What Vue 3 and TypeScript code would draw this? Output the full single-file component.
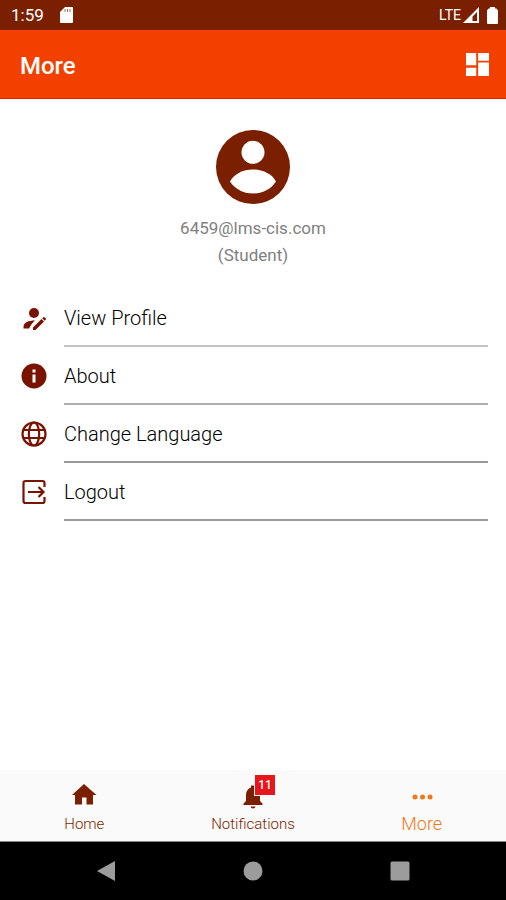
<script setup lang="ts">
import { ref } from 'vue'

type IconName = 'profile' | 'info' | 'globe' | 'logout'
type TabName = 'home' | 'notifications' | 'more'

const menu: { icon: IconName; label: string; tone: string }[] = [
  { icon: 'profile', label: 'View Profile', tone: 'pale' },
  { icon: 'info', label: 'About', tone: 'mid' },
  { icon: 'globe', label: 'Change Language', tone: 'dark' },
  { icon: 'logout', label: 'Logout', tone: 'dark' },
]

const tabs: { id: TabName; label: string; badge?: number }[] = [
  { id: 'home', label: 'Home' },
  { id: 'notifications', label: 'Notifications', badge: 11 },
  { id: 'more', label: 'More' },
]

const active = ref<TabName>('more')
</script>

<template>
  <div class="screen">
    <div class="status">
      <span class="time">1:59</span>
      <svg class="sd" viewBox="0 0 13 16"><path d="M5 0h7q1 0 1 1v14q0 1-1 1H1q-1 0-1-1V5z" fill="#fff" /><path d="M5 2v3M7.500 2v3M10 2v3" stroke="#a86a58" stroke-width="1" /></svg>
      <span class="network">LTE</span>
      <svg class="signal" viewBox="0 0 16 16"><path fill-rule="evenodd" d="M16 0v16H0zM14 5l-4.500 4.500V14H14z" fill="#fff" /></svg>
      <svg class="battery" viewBox="0 0 11 17"><path d="M3 0h5v1.500h1.500l1.500 2V16q0 1-1 1H1q-1 0-1-1V3.500l1.500-2H3z" fill="#fff" /></svg>
    </div>

    <header class="appbar">
      <h1>More</h1>
      <button class="dashboard" type="button" aria-label="Dashboard">
        <svg viewBox="3 3 18 18"><path d="M3 12.500h8V3H3zM3 21h8v-6.500H3zM12.500 21H21V10.500h-8.500zM12.500 3v6H21V3z" fill="#fff" /></svg>
      </button>
    </header>

    <main>
      <section class="account">
        <svg class="avatar" viewBox="0 0 74 74">
          <circle cx="37" cy="37" r="37" fill="#7a1f00" />
          <circle cx="37" cy="22.300" r="11.500" fill="#fff" />
          <path d="M14 51.500C18 44 27 39.500 37 39.500S56 44 60 51.500C55 59 47 63.500 37 63.500S19 59 14 51.500z" fill="#fff" />
        </svg>
        <p>6459@lms-cis.com</p>
        <p>(Student)</p>
      </section>

      <ul class="menu">
        <li v-for="item in menu" :key="item.label">
          <button type="button">
            <svg v-if="item.icon === 'profile'" viewBox="0 0 26 26" fill="currentColor">
              <circle cx="13" cy="8" r="5" />
              <path d="M2.500 23.500V22c0-4.500 5-6.500 11.500-6.500L11 18.500 8 23.500z" />
              <path d="M12 25v-2.500l8.500-8.500 2.500 2.500-8.500 8.500zM21.200 13.300l1.200-1.100q.7-.5 1.400.2l.9.900q.7.700.1 1.300l-1.100 1.200z" />
            </svg>
            <svg v-else-if="item.icon === 'info'" viewBox="0 0 26 26">
              <circle cx="13" cy="13" r="12.500" fill="currentColor" />
              <path d="M11.500 6.500h3v3h-3zM11.500 11.500h3v8h-3z" fill="#fff" />
            </svg>
            <svg v-else-if="item.icon === 'globe'" viewBox="0 0 26 26" fill="none" stroke="currentColor" stroke-width="2.200">
              <circle cx="13" cy="13" r="11.500" />
              <ellipse cx="13" cy="13" rx="5.200" ry="11.500" />
              <path d="M2.500 9h21M2.500 17h21" />
            </svg>
            <svg v-else viewBox="0 0 26 26" fill="none" stroke="currentColor" stroke-width="2.200">
              <path d="M23.500 8V4q0-2-2-2h-17q-2 0-2 2v18q0 2 2 2h17q2 0 2-2v-4" />
              <path d="M7 13h15M17.500 8l5 5-5 5" />
            </svg>
            <span :class="['label', item.tone]">{{ item.label }}</span>
          </button>
        </li>
      </ul>
    </main>

    <nav class="tabs">
      <button
        v-for="tab in tabs"
        :key="tab.id"
        type="button"
        :class="{ active: active === tab.id }"
        @click="active = tab.id"
      >
        <span class="glyph">
          <svg v-if="tab.id === 'home'" viewBox="0 0 26 26"><path d="M13 2L1 13h3v9.500h7v-7h4.500v7H22V13h3.500z" fill="currentColor" /></svg>
          <svg v-else-if="tab.id === 'notifications'" viewBox="0 0 26 26"><path d="M3.500 23v-1.500L6 19v-6c0-4 2-6.500 5-7.500V3.500h3v2c4 1 6 3.500 6 7.500v6l2.500 2.500V23zM10.500 24.500h5q-.5 2-2.500 2t-2.500-2z" fill="currentColor" /></svg>
          <svg v-else viewBox="0 0 26 26" fill="currentColor"><circle cx="6" cy="15" r="2.500" /><circle cx="13.500" cy="15" r="2.500" /><circle cx="21" cy="15" r="2.500" /></svg>
          <span v-if="tab.badge" class="badge">{{ tab.badge }}</span>
        </span>
        <span class="caption">{{ tab.label }}</span>
      </button>
    </nav>

    <div class="system">
      <button type="button" aria-label="Back"><svg viewBox="0 0 22 22"><path d="M20 1v20L2 11z" fill="#9c9c9c" /></svg></button>
      <button type="button" aria-label="Home screen"><svg viewBox="0 0 22 22"><circle cx="11" cy="11" r="9.500" fill="#9c9c9c" /></svg></button>
      <button type="button" aria-label="Recent apps"><svg viewBox="0 0 22 22"><rect x="1.500" y="1.500" width="19" height="19" rx="1.500" fill="#9c9c9c" /></svg></button>
    </div>
  </div>
</template>

<style>
body {
  margin: 0;
}
</style>

<style scoped>
.screen {
  min-height: 100vh;
  display: flex;
  flex-direction: column;
  background: #fff;
  font-family: Roboto, "Liberation Sans", sans-serif;
}

svg {
  display: block;
  overflow: visible;
}

button {
  margin: 0;
  padding: 0;
  border: 0;
  background: none;
  font: inherit;
  color: inherit;
  cursor: pointer;
}

.status {
  display: flex;
  align-items: center;
  height: 30px;
  padding: 0 8px 0 11px;
  background: #7a1f00;
  color: #fff;
}

.time {
  font-size: 17px;
}

.sd {
  width: 13px;
  height: 16px;
  margin-left: 16px;
}

.network {
  margin-left: auto;
  font-size: 14px;
}

.signal {
  width: 16px;
  height: 16px;
  margin-left: 2px;
}

.battery {
  width: 11px;
  height: 17px;
  margin-left: 8px;
}

.appbar {
  display: flex;
  align-items: center;
  justify-content: space-between;
  height: 68px;
  padding: 0 17px 0 20px;
  border-bottom: 1px solid #e81e00;
  background: #f24000;
  color: #fff;
}

h1 {
  margin: 0;
  padding-top: 3px;
  font-size: 24px;
  font-weight: 500;
}

.dashboard svg {
  width: 23px;
  height: 23px;
}

main {
  flex: 1;
}

.account {
  display: flex;
  flex-direction: column;
  align-items: center;
  padding: 31px 0 20px;
}

.avatar {
  width: 74px;
  height: 74px;
  margin-bottom: 11px;
}

.account p {
  margin: 0;
  font-size: 17px;
  line-height: 27px;
  color: #808080;
}

.menu {
  margin: 0;
  padding: 0 18px 0 21px;
  list-style: none;
}

.menu button {
  display: flex;
  align-items: center;
  gap: 17px;
  width: 100%;
  color: #7a1200;
  text-align: left;
}

.menu svg {
  width: 26px;
  height: 26px;
}

.label {
  flex: 1;
  box-sizing: border-box;
  height: 58px;
  border-bottom: 2px solid #999;
  font-size: 20px;
  font-weight: 300;
  line-height: 59px;
  color: #000;
}

.label.pale {
  border-color: #c4c4c4;
}

.label.mid {
  border-color: #b0b0b0;
}

.tabs {
  display: grid;
  grid-template-columns: repeat(3, 1fr);
  height: 71px;
  border-bottom: 1px solid #888;
  background: #fafafa;
  color: #7a1f00;
}

.tabs button {
  display: flex;
  flex-direction: column;
  align-items: center;
  padding-top: 12px;
}

.glyph {
  position: relative;
}

.glyph svg {
  width: 26px;
  height: 26px;
}

.badge {
  position: absolute;
  top: -7px;
  left: 15px;
  width: 20px;
  height: 20px;
  background: #e8151c;
  box-shadow: 0 0 0 1px #fafafa;
  color: #fff;
  font-size: 12px;
  font-weight: 500;
  line-height: 20px;
  text-align: center;
}

.caption {
  margin-top: 6px;
  font-size: 15px;
  font-weight: 300;
  line-height: 20px;
}

.tabs .active {
  color: #f07818;
}

.active .caption {
  font-size: 18px;
}

.system {
  display: grid;
  grid-template-columns: repeat(3, 1fr);
  height: 58px;
  padding: 0 33px;
  background: #000;
}

.system button {
  display: flex;
  align-items: center;
  justify-content: center;
}

.system svg {
  width: 22px;
  height: 22px;
}
</style>
